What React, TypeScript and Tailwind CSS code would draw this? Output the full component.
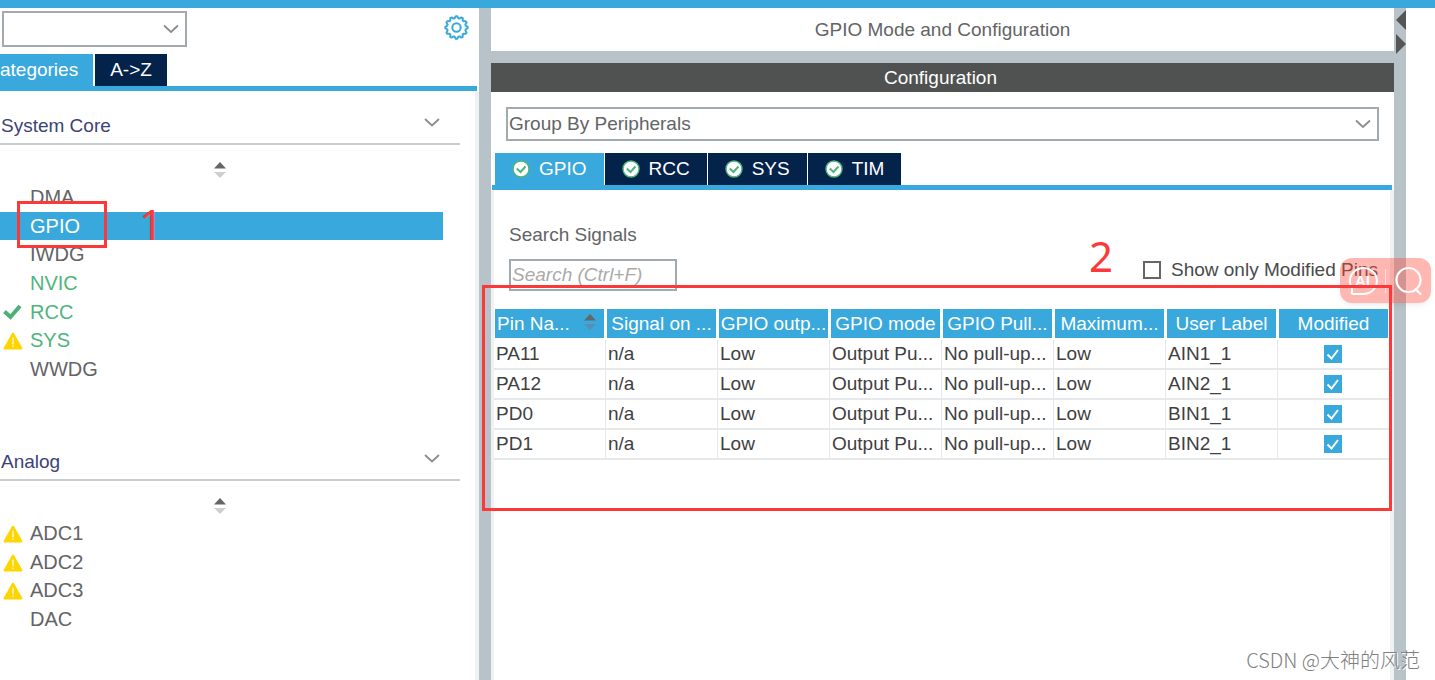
import { useState } from 'react'
import clsx from 'clsx'

type Status = 'ok' | 'warning'

interface Peripheral {
  name: string
  status?: Status
  enabled?: boolean
}

const systemCore: Peripheral[] = [
  { name: 'DMA' },
  { name: 'GPIO' },
  { name: 'IWDG' },
  { name: 'NVIC', enabled: true },
  { name: 'RCC', enabled: true, status: 'ok' },
  { name: 'SYS', enabled: true, status: 'warning' },
  { name: 'WWDG' },
]

const analog: Peripheral[] = [
  { name: 'ADC1', status: 'warning' },
  { name: 'ADC2', status: 'warning' },
  { name: 'ADC3', status: 'warning' },
  { name: 'DAC' },
]

const tabs = ['GPIO', 'RCC', 'SYS', 'TIM']

const columns = [
  'Pin Na...',
  'Signal on ...',
  'GPIO outp...',
  'GPIO mode',
  'GPIO Pull...',
  'Maximum...',
  'User Label',
  'Modified',
]

const pins = [
  { pin: 'PA11', label: 'AIN1_1' },
  { pin: 'PA12', label: 'AIN2_1' },
  { pin: 'PD0', label: 'BIN1_1' },
  { pin: 'PD1', label: 'BIN2_1' },
]

export default function App() {
  const [selected, setSelected] = useState('GPIO')
  const [tab, setTab] = useState('GPIO')

  return (
    <div className="relative flex min-h-screen flex-col overflow-hidden bg-white font-['Liberation_Sans',Arial,sans-serif] text-[19px] leading-6 text-[#636466]">
      <div className="h-2 bg-[#39a8dc]" />

      <div className="flex flex-1">
        {/* Peripheral list */}
        <aside className="flex w-[479px] shrink-0 flex-col">
          <div className="flex items-start justify-between pt-[3px] pr-2.5 pl-0.5">
            <Dropdown label="Find peripheral" options={['']} className="h-9 w-[185px]" />
            <button aria-label="Settings" className="mt-1">
              <GearIcon />
            </button>
          </div>

          <div className="mt-[7px] mr-0.5 flex gap-0.5 border-b-[5px] border-[#39a8dc]">
            <button className="h-8 w-[93px] bg-[#39a8dc] text-left text-white">ategories</button>
            <button className="h-8 w-[72px] bg-[#03234b] text-white">{'A->Z'}</button>
          </div>

          <div className="flex-1 border-r-4 border-[#eff2f3]">
            <Section title="System Core">
              <ul className="relative mr-8 flex h-[200px] flex-col">
                {systemCore.map((item) => (
                  <PeripheralRow
                    key={item.name}
                    item={item}
                    active={selected === item.name}
                    onSelect={() => setSelected(item.name)}
                  />
                ))}
                <Callout />
              </ul>
            </Section>
            <div className="h-11" />
            <Section title="Analog">
              <ul className="mr-8 flex h-[114px] flex-col">
                {analog.map((item) => (
                  <PeripheralRow
                    key={item.name}
                    item={item}
                    active={selected === item.name}
                    onSelect={() => setSelected(item.name)}
                  />
                ))}
              </ul>
            </Section>
          </div>
        </aside>

        <div className="w-3 shrink-0 bg-[#b8c3c9]" />

        {/* Configuration */}
        <main className="relative flex min-w-0 flex-1 flex-col">
          <h1 className="h-[43px] text-center leading-[43px]">GPIO Mode and Configuration</h1>
          <div className="h-3 bg-[#b8c3c9]" />
          <h2 className="h-[29px] bg-[#505251] pr-1 text-center leading-[29px] text-white">
            Configuration
          </h2>

          <div className="px-[15px] pt-[15px]">
            <Dropdown label="Group by" options={['Group By Peripherals']} className="h-[34px] w-full" />
          </div>

          <div className="mt-3 mr-0.5 ml-px flex gap-px border-b-[5px] border-[#39a8dc] pl-[3px]">
            {tabs.map((name) => (
              <button
                key={name}
                onClick={() => setTab(name)}
                className={clsx(
                  'flex h-8 items-center gap-[9px] px-[17px] text-white',
                  tab === name ? 'bg-[#39a8dc]' : 'bg-[#03234b]',
                )}
              >
                <CheckBadge />
                {name}
              </button>
            ))}
          </div>

          <div className="flex-1 border-r-4 border-l-[3px] border-[#eff2f3]">
            <div className="flex items-end justify-between pt-[33px] pr-3 pl-[15px]">
              <div className="flex flex-col gap-3">
                <label htmlFor="search">Search Signals</label>
                <input
                  id="search"
                  placeholder="Search (Ctrl+F)"
                  className="h-8 w-[168px] border-2 border-[#a3aaaf] px-px placeholder:text-[#aaaaaa] placeholder:italic"
                />
              </div>
              <label className="mb-[9px] flex items-center gap-2.5 text-[#4a4a4a]">
                <input type="checkbox" className="size-[18px] appearance-none border-2 border-[#666]" />
                Show only Modified Pins
              </label>
            </div>

            <table className="mt-[18px] w-full table-fixed border-separate border-spacing-0 text-[#3f4042]">
              <thead>
                <tr>
                  {columns.map((name, i) => (
                    <th
                      key={name}
                      className="h-[31px] overflow-hidden border-r-2 border-b-2 border-l border-white bg-[#39a8dc] p-0 font-normal whitespace-nowrap text-white"
                    >
                      {i === 0 ? (
                        <span className="flex items-center justify-between pr-2 pl-0.5">
                          {name}
                          <SortIcon className="mb-1" lower="#5590b0" />
                        </span>
                      ) : (
                        name
                      )}
                    </th>
                  ))}
                </tr>
              </thead>
              <tbody>
                {pins.map((row) => (
                  <tr key={row.pin}>
                    <Cell>{row.pin}</Cell>
                    <Cell>n/a</Cell>
                    <Cell>Low</Cell>
                    <Cell>Output Pu...</Cell>
                    <Cell>No pull-up...</Cell>
                    <Cell>Low</Cell>
                    <Cell>{row.label}</Cell>
                    <Cell>
                      <span className="flex justify-center pr-1">
                        <span className="grid size-[18px] place-items-center">
                          <input
                            type="checkbox"
                            defaultChecked
                            aria-label={`${row.pin} modified`}
                            className="peer col-start-1 row-start-1 size-[18px] appearance-none border border-[#39a8dc] checked:bg-[#39a8dc]"
                          />
                          <svg
                            viewBox="0 0 18 18"
                            className="pointer-events-none col-start-1 row-start-1 hidden size-[18px] peer-checked:block"
                          >
                            <path d="M3.5 9.5 7.5 13.5 14 5" fill="none" stroke="#fff" strokeWidth="2" />
                          </svg>
                        </span>
                      </span>
                    </Cell>
                  </tr>
                ))}
              </tbody>
            </table>
          </div>

          <AssistantBadge />
          <div className="pointer-events-none absolute top-[277px] right-0.5 -left-[9px] h-[226px] border-3 border-[#fd3838]" />
          <span className="pointer-events-none absolute top-[224px] right-[281px] font-['Noto_Sans',sans-serif] text-[42px] leading-[48px] text-[#fd3838]">
            2
          </span>
        </main>

        <div className="flex w-3 shrink-0 flex-col items-end gap-1 bg-[#b8c3c9] pt-0.5">
          <button aria-label="Collapse panel">
            <svg width="10" height="20" viewBox="0 0 10 20" className="block">
              <path d="M10 0v20L0 10z" fill="#555" />
            </svg>
          </button>
          <button aria-label="Expand panel">
            <svg width="10" height="20" viewBox="0 0 10 20" className="block">
              <path d="M0 0v20l10-10z" fill="#555" />
            </svg>
          </button>
        </div>
        <div className="w-[29px] shrink-0" />
      </div>

      <span className="absolute right-[15px] bottom-2 font-['Noto_Sans_CJK_SC',sans-serif] text-xl leading-6 font-light text-[#808080] [text-shadow:1px_1px_0_#fff]">
        CSDN @大神的风范
      </span>
    </div>
  )
}

function Dropdown({
  label,
  options,
  className,
}: {
  label: string
  options: string[]
  className?: string
}) {
  return (
    <div className={clsx('relative', className)}>
      <select
        aria-label={label}
        className="block size-full appearance-none border-2 border-[#a3aaaf] bg-white px-px"
      >
        {options.map((option) => (
          <option key={option}>{option}</option>
        ))}
      </select>
      <ChevronIcon className="pointer-events-none absolute top-1/2 right-2 -translate-y-1/2" />
    </div>
  )
}

function Section({ title, children }: { title: string; children: React.ReactNode }) {
  return (
    <section>
      <h3 className="mr-[15px] flex h-[54px] items-end justify-between border-b-2 border-[#c5cdd2] pr-5 pb-[5px] pl-px text-[#3c4376]">
        {title}
        <button aria-label={`Toggle ${title}`} className="mb-[11px]">
          <ChevronIcon />
        </button>
      </h3>
      <div className="mr-9 flex h-[38px] items-start justify-center pt-[17px]">
        <SortIcon lower="#cfcfcf" />
      </div>
      {children}
    </section>
  )
}

function PeripheralRow({
  item,
  active,
  onSelect,
}: {
  item: Peripheral
  active: boolean
  onSelect: () => void
}) {
  return (
    <li className="flex-1">
      <button
        onClick={onSelect}
        className={clsx(
          'flex size-full items-center text-left text-xl leading-6',
          active && 'bg-[#39a8dc] text-white',
          !active && item.enabled && 'text-[#4fb57c]',
        )}
      >
        <span className="w-[30px] pl-[3px]">
          {item.status === 'ok' && <TickIcon />}
          {item.status === 'warning' && <WarningIcon />}
        </span>
        {item.name}
      </button>
    </li>
  )
}

function Cell({ children }: { children: React.ReactNode }) {
  return (
    <td className="h-[30px] overflow-hidden border-r border-b-2 border-[#e6e9eb] py-0 pr-0 pl-0.5 whitespace-nowrap">
      {children}
    </td>
  )
}

function Callout() {
  return (
    <li className="pointer-events-none absolute top-[18px] left-[17px] flex text-[#fd3838]">
      <span className="h-[47px] w-[90px] border-3 border-current" />
      <span className="ml-8 font-['Noto_Sans',sans-serif] text-[42px] leading-[46px]">1</span>
    </li>
  )
}

function AssistantBadge() {
  return (
    <div className="absolute top-[250px] -right-[37px] flex h-[45px] w-[91px] items-center rounded-xl bg-[#ff4a3d]/40 shadow-md shadow-black/5">
      <button aria-label="AI assistant" className="pl-[7px]">
        <svg width="31" height="31" viewBox="0 0 31 31" fill="none" stroke="#fff" strokeWidth="2">
          <path
            d="M5 23A13.5 13 0 1 1 17 29H6.5Q4 29 5 27z"
            strokeLinecap="round"
            strokeLinejoin="round"
          />
          <text
            x="15.5"
            y="21"
            textAnchor="middle"
            fill="#fff"
            stroke="none"
            className="text-[15px] font-bold"
          >
            AI
          </text>
        </svg>
      </button>
      <span className="ml-[7px] h-6 w-px bg-white/60" />
      <button aria-label="Search" className="ml-[9px]">
        <svg width="28" height="30" viewBox="0 0 28 30" fill="none" stroke="#fff" strokeWidth="2.2">
          <circle cx="13.5" cy="14" r="12" />
          <path d="M20.5 23l5 5" strokeLinecap="round" />
        </svg>
      </button>
    </div>
  )
}

function ChevronIcon({ className }: { className?: string }) {
  return (
    <svg width="16" height="9" viewBox="0 0 16 9" className={clsx('block', className)}>
      <path d="M1 1l7 6.5L15 1" fill="none" stroke="#8c8c8c" strokeWidth="1.8" />
    </svg>
  )
}

function SortIcon({ lower, className }: { lower: string; className?: string }) {
  return (
    <svg width="12" height="16" viewBox="0 0 12 16" className={clsx('block', className)}>
      <path d="M6 0l6 6.5H0z" fill="#666" />
      <path d="M6 16l6-6H0z" fill={lower} />
    </svg>
  )
}

function TickIcon() {
  return (
    <svg width="19" height="16" viewBox="0 0 19 16" className="block">
      <path d="M1.5 7.5l6 5.5L17 2" fill="none" stroke="#4bb078" strokeWidth="4" />
    </svg>
  )
}

function WarningIcon() {
  return (
    <svg width="20" height="18" viewBox="0 0 20 18" className="mt-0.5 block">
      <path
        d="M10 1.5L18.5 16.5h-17z"
        fill="#ffd500"
        stroke="#ffd500"
        strokeWidth="2"
        strokeLinejoin="round"
      />
      <path d="M10 5.5v7M10 13.5v1.5" stroke="#fff" strokeWidth="1.2" />
    </svg>
  )
}

function CheckBadge() {
  return (
    <svg width="18" height="18" viewBox="0 0 18 18" className="block">
      <circle cx="9" cy="9" r="8" fill="#fff" stroke="#4fb57c" strokeWidth="1.4" />
      <path d="M4.8 8.5L8.5 12l5-5.5" fill="none" stroke="#4fb57c" strokeWidth="2" />
    </svg>
  )
}

// Twelve blunt teeth, four outline points for each
const gearOutline = Array.from({ length: 48 }, (_, i) => {
  const radius = i % 4 < 2 ? 11.2 : 9.4
  const angle = ((i - 0.5) * Math.PI) / 24 - Math.PI / 2
  const x = 12.5 + radius * Math.cos(angle)
  const y = 12.5 + radius * Math.sin(angle)
  return `${x.toFixed(2)},${y.toFixed(2)}`
}).join(' ')

function GearIcon() {
  return (
    <svg width="25" height="25" viewBox="0 0 25 25" fill="none" stroke="#39a8dc" className="block">
      <polygon points={gearOutline} strokeWidth="2" strokeLinejoin="round" />
      <circle cx="12.5" cy="12.5" r="4.2" strokeWidth="2" />
    </svg>
  )
}
